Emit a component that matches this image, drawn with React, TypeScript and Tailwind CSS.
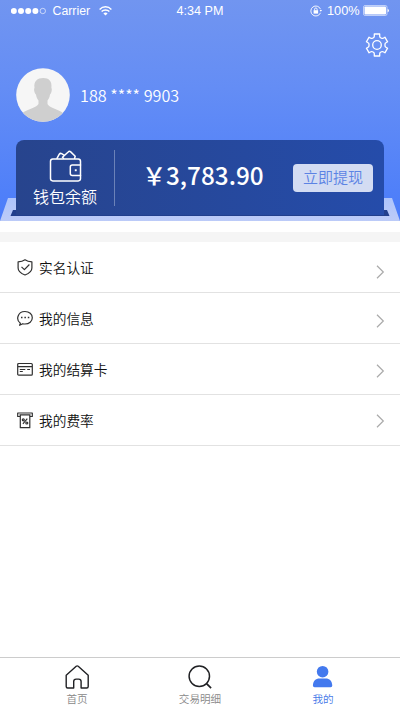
import React from "react";

const cjk = "font-['Noto_Sans_CJK_SC',sans-serif]";

function StatusBar() {
  return (
    <div className="grid h-[22px] grid-cols-3 items-center px-[11px] font-['Liberation_Sans',sans-serif] text-[12.3px] leading-none text-white">
      <div className="flex items-center">
        <svg width="35" height="8" viewBox="0 0 35 8" fill="#fff">
          <circle cx="2.8" cy="4" r="3" />
          <circle cx="10" cy="4" r="3" />
          <circle cx="17.2" cy="4" r="3" />
          <circle cx="24.4" cy="4" r="3" />
          <circle cx="31.8" cy="4" r="2.7" fill="none" stroke="#fff" strokeWidth=".6" />
        </svg>
        <span className="ml-[6.5px] w-[38.5px] whitespace-nowrap">Carrier</span>
        <svg className="ml-[8px]" width="13" height="10" viewBox="0 0 13 10" fill="none" stroke="#fff" strokeWidth="1.4">
          <path d="M.6 3.4C4-.1 9-.1 12.4 3.4M2.6 5.600c2.200-2.200 5.600-2.200 7.800 0" />
          <path d="M4.400 7.400c1.200-1.100 3-1.100 4.200 0L6.500 9.500z" fill="#fff" stroke="none" />
        </svg>
      </div>
      <div className="whitespace-nowrap text-center text-[12.6px]">4:34 PM</div>
      <div className="flex items-center justify-end">
        <svg width="12" height="12" viewBox="0 0 12 12" fill="none" stroke="#fff">
          <path d="M10.500 4.200A5 5 0 1 0 10.500 7.800M10.700 5v1" strokeWidth=".9" />
          <path d="M9.700 5h2.300l-1.200 1.700z" fill="#fff" stroke="none" />
          <rect x="3.600" y="5.200" width="4.500" height="3.400" fill="#fff" stroke="none" />
          <path d="M4.600 5.300V4.200a1.250 1.250 0 0 1 2.500 0v1.100" strokeWidth=".9" />
        </svg>
        <span className="ml-[5px] w-[33px] whitespace-nowrap text-[12.8px]">100%</span>
        <svg className="ml-[3px]" width="26" height="11" viewBox="0 0 26 11">
          <rect x=".5" y=".5" width="23.500" height="10" rx="1.600" fill="none" stroke="#fff" strokeOpacity=".7" strokeWidth=".8" />
          <rect x="1.500" y="1.500" width="21.500" height="8" rx=".8" fill="#fff" />
          <path d="M24.600 3.700q1.300.4 1.300 1.800t-1.300 1.800z" fill="#fff" />
        </svg>
      </div>
    </div>
  );
}

function Gear() {
  return (
    <svg width="24" height="24" viewBox="0 0 24 24" fill="none" stroke="#fff" strokeWidth="1.300" strokeLinejoin="round">
      <path d="M9.300 1h5.400v2.200q0 1 .9 1.500l.9.500q.9.500 1.700 0l1.700-1 2.700 4.600-1.700 1q-.9.500-.9 1.500v1.400q0 1 .9 1.500l1.700 1-2.700 4.600-1.700-1q-.8-.5-1.700 0l-.9.500q-.9.500-.9 1.500V23H9.300v-2.200q0-1-.9-1.500l-.9-.5q-.9-.5-1.700 0l-1.700 1-2.700-4.600 1.700-1q.9-.5.9-1.500v-1.400q0-1-.9-1.500l-1.700-1 2.700-4.600 1.700 1q.8.500 1.700 0l.9-.5q.9-.5.9-1.500z" />
      <circle cx="12" cy="12" r="4.300" />
    </svg>
  );
}

function Avatar() {
  return (
    <svg width="54" height="54" viewBox="0 0 54 54">
      <defs>
        <clipPath id="avatar">
          <circle cx="27" cy="27" r="26.800" />
        </clipPath>
      </defs>
      <g clipPath="url(#avatar)">
        <path fill="#f6f6f6" d="M0 0h54v54H0z" />
        <path fill="#cfcfcf" d="M18.500 20c-1-7 3-10 8.700-10s9 3 8.200 10c1 .5 0 6-1.400 6.500-.4 3-1.200 4.500-2.500 6v3.500c1.500 3.500 11 5.500 15 8.500V54H7v-9.500c4-3 13.500-5 15.500-8.500v-3.500c-1.300-1.500-2-3-2.500-6-1.500-.5-2.500-6-1.500-6.500z" />
      </g>
    </svg>
  );
}

function Wallet() {
  return (
    <svg width="33" height="32" viewBox="0 0 33 32" fill="none" stroke="#fff" strokeWidth="1.500" strokeLinejoin="round" strokeLinecap="round">
      <rect x="1.500" y="8.900" width="30" height="22" rx="2.300" />
      <path d="M31.500 14.900h-8.200a2 2 0 0 0-2 2v6.500a2 2 0 0 0 2 2h8.200" />
      <path d="M8 8.300l2.300-4.100q.9-1.300 2.300-.5l2.400 1.500M14.500 8.300l-1-1 5.700-5.300q1.200-1.300 2.500-.1l4.500 4.400-.6 2" />
      <rect x="25.800" y="19.300" width="1.900" height="1.900" fill="#fff" stroke="none" />
    </svg>
  );
}

function WalletCard() {
  return (
    <div className="relative h-[81px]">
      <svg className="absolute bottom-0 left-0" width="400" height="23" viewBox="0 0 400 23">
        <defs>
          <linearGradient id="tray" x1="0" y1="0" x2="0" y2="1">
            <stop stopColor="#aec4fb" />
            <stop offset="1" stopColor="#bccbf8" />
          </linearGradient>
        </defs>
        <path d="M8 0H392L400 23H0z" fill="url(#tray)" />
        <path d="M13 12H387L389.500 18H10.500z" fill="#213f8d" />
      </svg>
      <div className="relative mx-4 flex h-[76px] rounded-t-[8px] border-b border-[#213f8d] bg-linear-to-r from-[#27448d] to-[#254caa] text-white">
        <div className="flex w-[98px] flex-col items-center pt-[10px]">
          <Wallet />
          <span className="mt-[4px] text-[16px] font-[350] leading-[20px]">钱包余额</span>
        </div>
        <div className="mt-[10px] h-[56px] w-px bg-[#6b82b8]" />
        <div className="flex w-[178px] items-center pb-[4px] pl-[27px] text-[24.300px] font-medium leading-none">
          <span className="w-[24px] whitespace-nowrap">{"\uffe5"}</span>
          <span>3,783.90</span>
        </div>
        <button className="mt-6 h-7 w-20 rounded-[4px] bg-[#d3dcf3] pb-[2px] text-[15px] font-[350] leading-[26px] text-[#5b83e4]">立即提现</button>
      </div>
    </div>
  );
}

const icons = {
  shield: (
    <>
      <path d="M8 .8c2 1.500 4.300 2 6.900 2v6.200c0 3.300-3.400 5.700-6.900 7C4.500 14.700 1.100 12.300 1.100 9V2.800c2.600 0 4.900-.5 6.900-2z" />
      <path d="M4.500 7.800l2.900 2.900 5-5.200" />
    </>
  ),
  chat: (
    <>
      <path d="M3.400 13.300C-1.300 10.200.3 1.500 8 1.500c4.200 0 7.300 2.700 7.300 6.300S12.200 14 8 14c-.8 0-1.500 0-2.200-.3l-3.200 1.600z" />
      <path d="M4 7.500h1.500M7.400 7.500h1.500M10.800 7.500h1.500" strokeWidth="1.600" />
    </>
  ),
  card: (
    <>
      <rect x=".7" y="2.500" width="14.600" height="11.700" rx="1" />
      <path d="M1 5.700h14M2.800 8.500h5.500M2.800 10.500h3M10.200 8.500h2.800" />
    </>
  ),
  rate: (
    <>
      <path d="M3 4.500H.7V1h14.600v3.500H13M2.500 2.800h11M3.300 3v12.700h9.500V3" />
      <path d="M5.900 11.900l4.400-5.200" />
      <circle cx="6.300" cy="7.800" r="1" />
      <circle cx="9.800" cy="11" r="1" />
    </>
  ),
};

const rows = [
  { label: "实名认证", icon: icons.shield, arrow: "pt-[9px]" },
  { label: "我的信息", icon: icons.chat, arrow: "pt-[6px]" },
  { label: "我的结算卡", icon: icons.card, arrow: "pt-[3px]" },
  { label: "我的费率", icon: icons.rate, arrow: "pt-[1px]" },
];

function Menu() {
  return (
    <nav>
      {rows.map((row) => (
        <a key={row.label} className="flex h-[51px] items-center border-b border-[#e2e2e2] pl-[17px] pr-[15px]">
          <svg width="16" height="17" viewBox="0 0 16 17" fill="none" stroke="#303030" strokeWidth="1.200" strokeLinejoin="round">
            {row.icon}
          </svg>
          <span className="ml-[6px] flex-1 text-[13.700px] font-[350] leading-5 text-[#111]">{row.label}</span>
          <span className={row.arrow}>
            <svg width="9" height="14" viewBox="0 0 9 14" fill="none" stroke="#aaa" strokeWidth="1.200">
              <path d="M1 .8L7.300 7 1 13.200" />
            </svg>
          </span>
        </a>
      ))}
    </nav>
  );
}

function TabBar() {
  return (
    <footer className="mt-auto flex h-[53px] items-start justify-between border-t border-[#ccc] px-[47px] pt-[7px] text-[10.600px] font-[350] leading-4 text-[#888]">
      <div className="flex w-[60px] flex-col items-center">
        <svg width="26" height="25" viewBox="0 0 26 25" fill="none" stroke="#202124" strokeWidth="1.400" strokeLinejoin="round">
          <path d="M2.200 10.300L12.200 1.300q1-.8 2 0l10 9v11.200q0 1.500-1.500 1.500h-5.600v-6.500q0-2.400-2.400-2.400h-2.600q-2.400 0-2.400 2.400V23H3.700q-1.500 0-1.500-1.500z" />
        </svg>
        <span className="mt-[1px]">首页</span>
      </div>
      <div className="flex w-[60px] flex-col items-center">
        <svg width="26" height="25" viewBox="0 0 26 25" fill="none" stroke="#202124" strokeWidth="1.500">
          <circle cx="12.300" cy="11.200" r="10.200" />
          <path d="M19.300 18.300l4.800 4.800" strokeWidth="1.700" />
        </svg>
        <span className="mt-[1px]">交易明细</span>
      </div>
      <div className="flex w-[60px] flex-col items-center text-[#4478e8]">
        <svg width="22" height="25" viewBox="0 0 22 25" fill="#4379ee">
          <circle cx="10.600" cy="6.700" r="5.800" />
          <path d="M.9 20.500C1.100 16 3.600 13.500 7.600 13.500h6c4 0 6.500 2.500 6.700 7q0 1.700-1.700 1.700h-16q-1.700 0-1.700-1.700z" />
        </svg>
        <span className="mt-[1px]">我的</span>
      </div>
    </footer>
  );
}

export default function App() {
  return (
    <main className={`flex h-[710px] w-[400px] flex-col overflow-hidden bg-white ${cjk}`}>
      <header className="flex h-[221px] flex-col bg-linear-to-b from-[#7195f0] via-[#648df5] via-40% to-[#4a7cfa]">
        <StatusBar />
        <div className="flex h-[46px] justify-end pr-[11.5px] pt-[11px]">
          <Gear />
        </div>
        <div className="flex h-[72px] items-start pl-4">
          <Avatar />
          <span className="ml-[10px] whitespace-pre text-[16.200px] font-[350] leading-[54px] text-white">188 **** 9903</span>
        </div>
        <WalletCard />
      </header>
      <div className="mt-[11px] h-[10px] bg-[#f5f5f5]" />
      <Menu />
      <TabBar />
    </main>
  );
}
